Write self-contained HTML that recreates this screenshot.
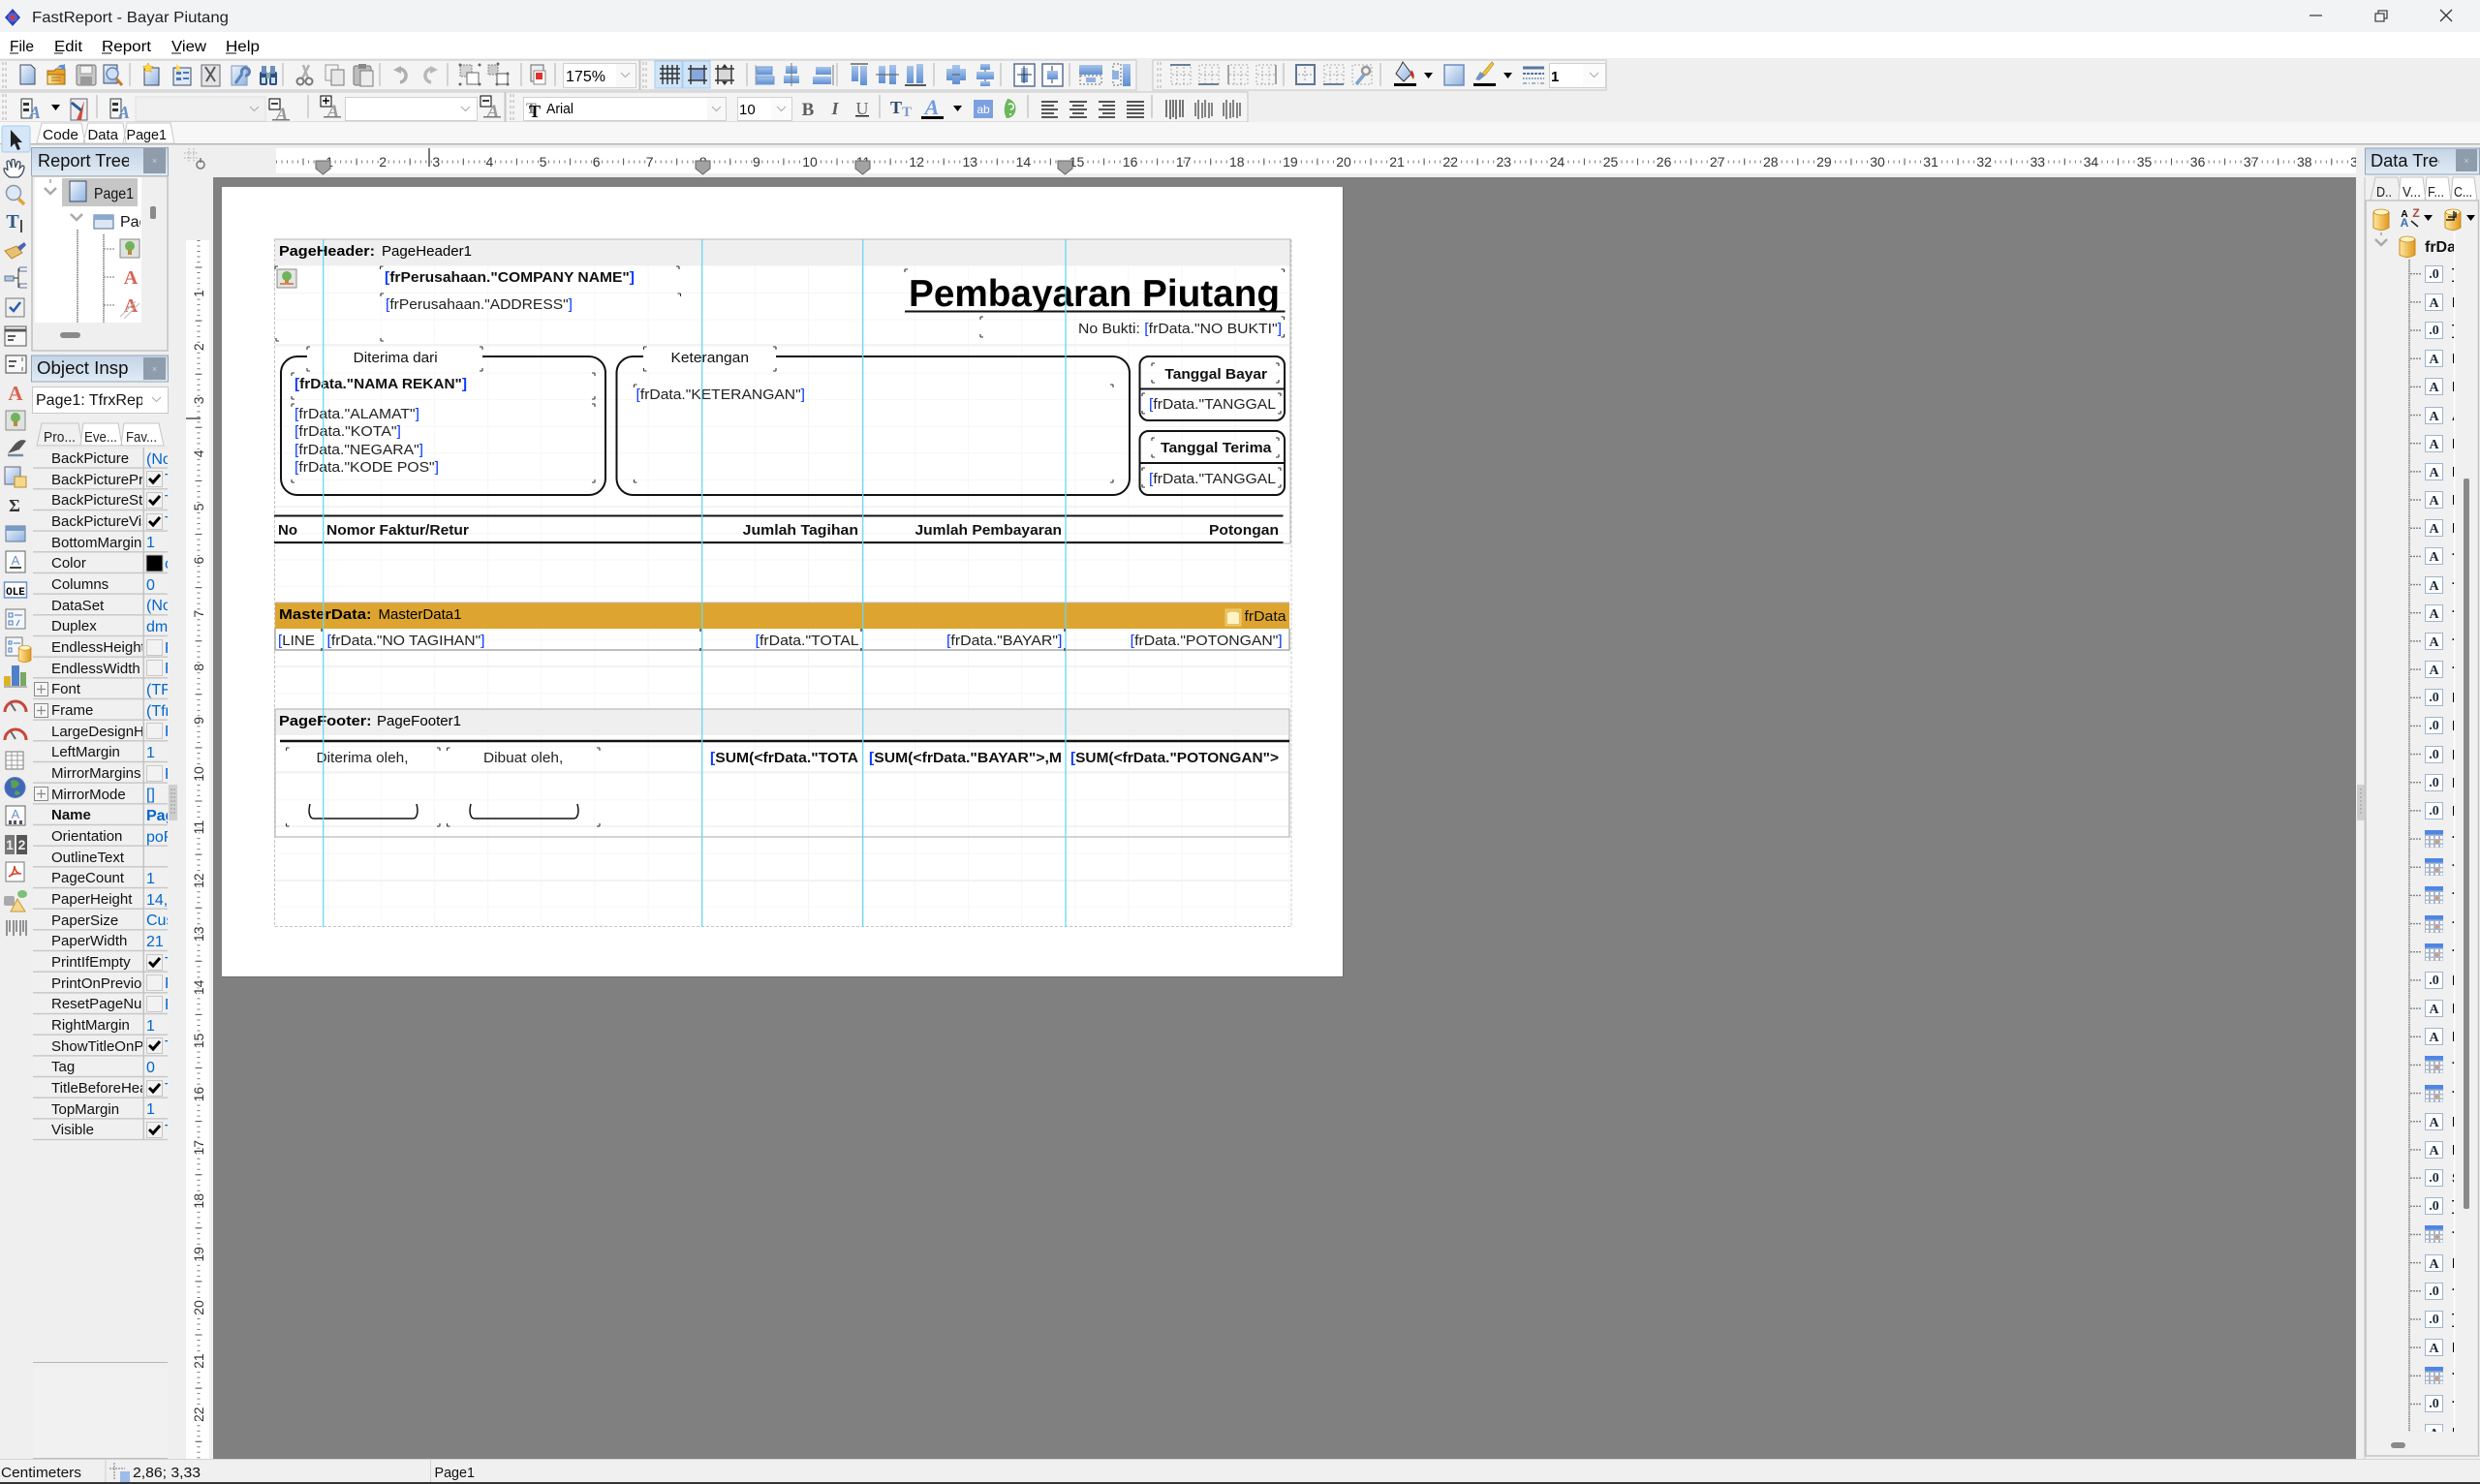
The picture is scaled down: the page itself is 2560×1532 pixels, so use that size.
<!DOCTYPE html>
<html lang="en"><head><meta charset="utf-8"><title>FastReport - Bayar Piutang</title>
<style>
html,body{margin:0;padding:0;background:#efefef;width:2560px;height:1532px;overflow:hidden}
svg{display:block}
text{font-family:"Liberation Sans",Arial,sans-serif;font-size:15px;fill:#000;white-space:pre}
.b{font-weight:700}
.u{fill:#0a3cff}
.r{font-size:14px;fill:#333;text-anchor:middle;paint-order:stroke;stroke:#fff;stroke-width:3px}
.p{font-size:15px;fill:#111}
.v{font-size:16px;fill:#0066cc}
.m{font-size:16px;fill:#111}
.c{text-anchor:middle}
.e{text-anchor:end}
</style></head><body>
<svg width="2560" height="1532" viewBox="0 0 2560 1532" xmlns="http://www.w3.org/2000/svg">
<defs>
<linearGradient id="gB" x1="0" y1="0" x2="1" y2="1"><stop offset="0" stop-color="#f2f6fc"/><stop offset="1" stop-color="#8fb2e0"/></linearGradient>
<linearGradient id="gBB" x1="0" y1="0" x2="0" y2="1"><stop offset="0" stop-color="#a9c6ec"/><stop offset="1" stop-color="#5f8fd2"/></linearGradient>
<linearGradient id="gG" x1="0" y1="0" x2="1" y2="0"><stop offset="0" stop-color="#ffe9a0"/><stop offset="1" stop-color="#e0981e"/></linearGradient>
<linearGradient id="gS" x1="0" y1="0" x2="1" y2="1"><stop offset="0" stop-color="#fff"/><stop offset="1" stop-color="#b4b4b4"/></linearGradient>
<linearGradient id="gT" x1="0" y1="0" x2="0" y2="1"><stop offset="0" stop-color="#c3d4e6"/><stop offset="1" stop-color="#e0ebf5"/></linearGradient>
<pattern id="grid" x="283" y="247" width="55.1" height="27.55" patternUnits="userSpaceOnUse"><path d="M0 0V27.55M0 0H55.1" stroke="#f3f3f3" stroke-width="1.4" fill="none"/></pattern>
<pattern id="rows" x="34" y="462.2" width="139" height="21.67" patternUnits="userSpaceOnUse"><rect width="139" height="21.67" fill="#f0f0f0"/><rect y="20.2" width="139" height="1.4" fill="#c6c6c6"/></pattern>
<pattern id="brn" x="2487" y="268.1" width="16" height="29.17" patternUnits="userSpaceOnUse"><path d="M1 14.6H12" stroke="#777" stroke-width="1.2" stroke-dasharray="2 1"/></pattern>
<clipPath id="cName"><rect x="34" y="462" width="113" height="716"/></clipPath>
<clipPath id="cVal"><rect x="149" y="462" width="24" height="716"/></clipPath>
<clipPath id="cRT"><rect x="36" y="150" width="97" height="31"/></clipPath>
<clipPath id="cOI"><rect x="36" y="365" width="97" height="29"/></clipPath>
<clipPath id="cDT"><rect x="2445" y="150" width="73" height="30"/></clipPath>
<clipPath id="cCombo"><rect x="33" y="399" width="114" height="27"/></clipPath>
<clipPath id="cPag"><rect x="120" y="214" width="25" height="26"/></clipPath>
<clipPath id="cTree"><rect x="2443" y="268" width="90" height="1210"/></clipPath>
<clipPath id="cFr"><rect x="2500" y="240" width="33" height="26"/></clipPath>
<clipPath id="cTitle"><rect x="930" y="280" width="400" height="40.5"/></clipPath>
<clipPath id="cRul"><rect x="285" y="153" width="2147" height="26"/></clipPath>

<g id="page"><path d="M5 2h11l4 4v16H5z" fill="url(#gB)" stroke="#3d4c60"/></g>
<g id="open"><path d="M3 8h7l2-2h9v16H3z" fill="#e9a22a" stroke="#a06a10"/><path d="M3 12h18v10H3z" fill="url(#gG)" stroke="#a06a10"/><path d="M7 15h10M7 18h10" stroke="#a9701c"/><path d="M13 5q3-4 6-3l2-1v6h-5l2-2q-2-1-5 0z" fill="#5c8fd0"/></g>
<g id="save"><rect x="3" y="2" width="20" height="21" rx="2" fill="#c9c9c9" stroke="#777"/><rect x="7" y="3" width="12" height="8" fill="#f4f4f4" stroke="#999"/><rect x="7" y="14" width="12" height="9" fill="#9a9a9a"/></g>
<g id="prev"><path d="M3 2h14v19H3z" fill="url(#gB)" stroke="#3d4c60"/><circle cx="12" cy="11" r="6" fill="#cfe0f5" stroke="#6388b8" stroke-width="1.5"/><path d="M16 16l6 7" stroke="#c97c28" stroke-width="3"/></g>
<g id="newp"><path d="M5 5h15v18H5z" fill="url(#gB)" stroke="#3d4c60"/><path d="M9 0l1.5 3 3.5.5-2.500 2.500.8 3.500L9 8l-3.800 1.500L6 6 3.500 3.500 7 3z" fill="#ffd84a" stroke="#e0a820" stroke-width=".6"/></g>
<g id="newd"><rect x="4" y="5" width="18" height="18" fill="#dfe8f4" stroke="#3d4c60"/><rect x="7" y="9" width="5" height="3" fill="#4a78b8"/><rect x="7" y="15" width="5" height="3" fill="#4a78b8"/><path d="M14 10h6M14 16h6" stroke="#4a78b8" stroke-width="2"/><path d="M7 0l1.500 3 3.500.5-2.500 2.500.8 3.500L7 8z" fill="#ffd84a"/></g>
<g id="delp"><rect x="3" y="2" width="19" height="22" fill="#e4e4e4" stroke="#667"/><path d="M7 4l10 15M17 4L8 19" stroke="#555" stroke-width="2"/></g>
<g id="sett"><rect x="4" y="3" width="16" height="20" fill="url(#gB)" stroke="#7d97bb"/><path d="M8 21L15 11M15 11a4 4 0 1 1 3 2" stroke="#5c82b8" stroke-width="3" fill="none"/></g>
<g id="find"><rect x="3" y="9" width="8" height="14" rx="2" fill="#2e5082"/><rect x="13" y="9" width="8" height="14" rx="2" fill="#2e5082"/><rect x="5" y="3" width="5" height="8" fill="#6e8fbc"/><rect x="14" y="3" width="5" height="8" fill="#6e8fbc"/><rect x="10" y="10" width="4" height="6" fill="#8aa"/><rect x="5" y="15" width="4" height="6" fill="#cfe0f5"/><rect x="15" y="15" width="4" height="6" fill="#cfe0f5"/></g>
<g id="cut"><path d="M9 16L16 2M15 16L10 2" stroke="#b0b0b0" stroke-width="2.500"/><circle cx="7" cy="19" r="3.500" fill="none" stroke="#777" stroke-width="2"/><circle cx="16" cy="19" r="3.500" fill="none" stroke="#777" stroke-width="2"/></g>
<g id="copy"><rect x="3" y="2" width="13" height="16" fill="#f4f4f4" stroke="#999"/><rect x="9" y="7" width="13" height="16" fill="#e8e8e8" stroke="#777"/></g>
<g id="past"><rect x="3" y="3" width="18" height="20" rx="2" fill="#bcbcbc" stroke="#777"/><rect x="8" y="1" width="8" height="5" fill="#888"/><rect x="10" y="8" width="13" height="16" fill="#ececec" stroke="#777"/></g>
<g id="undo"><path d="M9 6a7 7 0 1 1 2 14" fill="none" stroke="#aeaeae" stroke-width="3.500"/><path d="M4 7l8-4v8z" fill="#aeaeae"/></g>
<g id="redo"><path d="M15 6a7 7 0 1 0-2 14" fill="none" stroke="#b8b8b8" stroke-width="3.500"/><path d="M20 7l-8-4v8z" fill="#b8b8b8"/></g>
<g id="grp"><rect x="2" y="2" width="12" height="12" fill="#d4d4d4" stroke="#888" stroke-dasharray="2 1"/><rect x="9" y="10" width="12" height="12" fill="#fff" stroke="#666"/><circle cx="2" cy="2" r="1.500" fill="#666"/><circle cx="22" cy="2" r="1.500" fill="#666"/><circle cx="2" cy="22" r="1.500" fill="#666"/><circle cx="22" cy="22" r="1.500" fill="#666"/></g>
<g id="ugrp"><rect x="2" y="2" width="10" height="10" fill="#ccc" stroke="#888" stroke-dasharray="2 1"/><rect x="11" y="11" width="11" height="11" fill="#fff" stroke="#555"/><circle cx="12" cy="1" r="1.500" fill="#666"/><circle cx="22" cy="11" r="1.500" fill="#666"/><circle cx="11" cy="22" r="1.500" fill="#666"/><circle cx="22" cy="22" r="1.500" fill="#666"/></g>
<g id="fron"><rect x="4" y="2" width="13" height="17" fill="#eee" stroke="#666"/><rect x="7" y="8" width="12" height="14" fill="#fff" stroke="#888"/><rect x="9" y="10" width="7" height="7" fill="#e0322c"/></g>
<g id="g1"><path d="M5 2v20M10 2v20M15 2v20M20 2v20M2 6h21M2 11h21M2 16h21" stroke="#333" stroke-width="1.500"/></g>
<g id="g2"><rect x="6" y="6" width="12" height="12" fill="#86a8dc"/><path d="M5 2v20M19 2v20M2 6h20M2 18h20" stroke="#333" stroke-width="1.500"/></g>
<g id="g3"><rect x="6" y="6" width="12" height="12" fill="#d8d8d8"/><path d="M5 2v20M19 2v20M2 6h20M2 18h20" stroke="#333" stroke-width="1.500"/><path d="M12 1l-3 4h6zM12 23l-3-4h6z" fill="#333"/></g>
<g id="a1"><rect x="3" y="4" width="16" height="8" fill="url(#gBB)" stroke="#6d97d3"/><rect x="3" y="14" width="18" height="8" fill="url(#gBB)" stroke="#6d97d3"/><path d="M2 2v21" stroke="#aaa"/></g>
<g id="a2"><rect x="6" y="3" width="12" height="8" fill="url(#gBB)"/><rect x="4" y="13" width="16" height="8" fill="url(#gBB)"/><path d="M12 0v24" stroke="#777"/></g>
<g id="a3"><rect x="5" y="4" width="16" height="8" fill="url(#gBB)"/><rect x="2" y="14" width="19" height="8" fill="url(#gBB)"/><path d="M23 2v21" stroke="#777"/></g>
<g id="a4"><path d="M3 1h18" stroke="#888" stroke-width="2"/><rect x="4" y="3" width="7" height="16" fill="url(#gBB)"/><rect x="13" y="3" width="7" height="20" fill="url(#gBB)"/></g>
<g id="a5"><rect x="3" y="3" width="7" height="18" fill="url(#gBB)"/><rect x="14" y="2" width="7" height="20" fill="url(#gBB)"/><path d="M0 12h24" stroke="#555"/></g>
<g id="a6"><rect x="3" y="3" width="7" height="18" fill="url(#gBB)"/><rect x="13" y="1" width="7" height="20" fill="url(#gBB)"/><path d="M1 23h22" stroke="#555" stroke-width="2"/></g>
<g id="d1"><rect x="8" y="2" width="8" height="20" fill="url(#gBB)"/><rect x="2" y="6" width="6" height="12" fill="url(#gBB)"/><rect x="16" y="6" width="6" height="12" fill="url(#gBB)"/><path d="M8 12h8" stroke="#555"/></g>
<g id="d2"><rect x="7" y="1" width="10" height="6" fill="url(#gBB)"/><rect x="3" y="9" width="18" height="8" fill="url(#gBB)"/><rect x="7" y="19" width="10" height="5" fill="url(#gBB)"/><path d="M12 7v2M12 17v2" stroke="#555"/></g>
<g id="c1"><rect x="2" y="1" width="21" height="23" fill="#fff" stroke="#5a7090" stroke-width="1.500"/><rect x="9" y="5" width="7" height="15" fill="url(#gBB)"/><path d="M5 12h15M12 3v18" stroke="#333"/></g>
<g id="c2"><rect x="2" y="1" width="21" height="23" fill="#fff" stroke="#5a7090" stroke-width="1.500"/><rect x="7" y="8" width="11" height="9" fill="url(#gBB)"/><path d="M12 3v5M12 17v4" stroke="#333"/></g>
<g id="s1"><rect x="0" y="2" width="24" height="10" fill="url(#gBB)"/><path d="M1 13h22v9H1z" fill="none" stroke="#666" stroke-dasharray="2 2"/><rect x="7" y="15" width="10" height="5" fill="#8fb2e0"/></g>
<g id="s2"><rect x="15" y="1" width="8" height="23" fill="url(#gBB)"/><path d="M5 1h8v22H5z" fill="none" stroke="#666" stroke-dasharray="2 2"/><rect x="4" y="8" width="7" height="9" fill="#8fb2e0"/></g>
<g id="f1"><path d="M2 2v20h20V2z" fill="none" stroke="#aaa" stroke-dasharray="2 2"/><path d="M1 2h21M8 4v18M15 4v18M3 12h18" stroke="#aaa" stroke-dasharray="2 2"/><path d="M1 2h21" stroke="#6a7f98" stroke-width="2"/></g>
<g id="f2"><path d="M2 2v20h20V2z" fill="none" stroke="#aaa" stroke-dasharray="2 2"/><path d="M8 4v18M15 4v18M3 12h18" stroke="#aaa" stroke-dasharray="2 2"/><path d="M1 22h21" stroke="#6a7f98" stroke-width="2"/></g>
<g id="f3"><path d="M2 2v20h20V2z" fill="none" stroke="#aaa" stroke-dasharray="2 2"/><path d="M8 4v18M15 4v18M3 12h18" stroke="#aaa" stroke-dasharray="2 2"/><path d="M2 2v20" stroke="#888" stroke-width="1.500"/></g>
<g id="f4"><path d="M2 2v20h20V2z" fill="none" stroke="#aaa" stroke-dasharray="2 2"/><path d="M8 4v18M15 4v18M3 12h18" stroke="#aaa" stroke-dasharray="2 2"/><path d="M22 2v20" stroke="#888" stroke-width="1.500"/></g>
<g id="f5"><rect x="2" y="2" width="19" height="20" fill="none" stroke="#5f7694" stroke-width="2"/><path d="M11 4v16M4 12h15" stroke="#999" stroke-dasharray="2 2"/></g>
<g id="f7"><path d="M2 2v20h20V2z" fill="none" stroke="#aaa" stroke-dasharray="2 2"/><path d="M6 22L15 11" stroke="#7ea2d4" stroke-width="3.500"/><circle cx="16" cy="8" r="4" fill="none" stroke="#999" stroke-width="2.500"/></g>
<g id="fill"><path d="M10 1l9 12-8 8-8-8 5-8z" fill="url(#gB)" stroke="#333"/><path d="M19 9q4 5 2 10l-3-5z" fill="#c9281e"/><rect x="1" y="23" width="23" height="3" fill="#000"/></g>
<g id="fram"><rect x="2" y="2" width="20" height="21" fill="url(#gB)" stroke="#6a8dbe" stroke-width="1.500"/></g>
<g id="pen"><path d="M3 19l5-8 5 4-6 5z" fill="#6f93c6"/><path d="M10 13L20 1l2 2-9 12z" fill="#f0c33e" stroke="#b08418" stroke-width=".6"/><rect x="1" y="23" width="23" height="3" fill="#000"/></g>
<g id="lines"><path d="M1 4h22" stroke="#55779f" stroke-width="3"/><path d="M1 10h22" stroke="#55779f" stroke-width="2" stroke-dasharray="3 1"/><path d="M1 15h22" stroke="#55779f" stroke-width="1.500" stroke-dasharray="1.500 1.500"/><path d="M1 20h22" stroke="#55779f" stroke-dasharray="4 2 1 2"/></g>
<g id="arr"><path d="M0 0h9l-4.500 6z" fill="#000"/></g>
<g id="chev"><path d="M0 0l4.500 4.500L9 0" fill="none" stroke="#aaa" stroke-width="1"/></g>
<g id="t1"><rect x="3" y="2" width="11" height="20" fill="#f6f6f6" stroke="#344"/><rect x="5" y="6" width="6" height="3" fill="#333"/><rect x="5" y="12" width="6" height="3" fill="#333"/><text x="17" y="22" class="c b" style="font-family:'Liberation Serif',serif;font-size:18px;font-style:italic;fill:#6a8fc8">A</text></g>
<g id="t2"><rect x="3" y="2" width="17" height="22" fill="#eee" stroke="#667"/><path d="M9 24L17 4l-3 20" fill="#d04c3e"/><path d="M4 6l10 8" stroke="#2b5a94" stroke-width="3"/></g>
<g id="t3"><rect x="2" y="2" width="11" height="11" fill="#fff" stroke="#000"/><path d="M4 7h7M7.500 3.500v7" stroke="#000" stroke-width="1.500"/><text x="15" y="24" class="c b" style="font-family:'Liberation Serif',serif;font-size:19px;font-style:italic;fill:#999">A</text><rect x="5" y="23" width="18" height="1.500" fill="#777"/></g>
<g id="t4"><rect x="2" y="2" width="11" height="11" fill="#fff" stroke="#000"/><path d="M4 7h7" stroke="#000" stroke-width="1.500"/><text x="15" y="24" class="c b" style="font-family:'Liberation Serif',serif;font-size:19px;font-style:italic;fill:#999">A</text><rect x="5" y="23" width="18" height="1.500" fill="#777"/></g>
<g id="al1"><path d="M2 5h17M2 9h13M2 13h17M2 17h13M2 21h17" stroke="#555" stroke-width="2"/></g>
<g id="al2"><path d="M2 5h18M5 9h12M2 13h18M5 17h12M2 21h18" stroke="#555" stroke-width="2"/></g>
<g id="al3"><path d="M3 5h17M7 9h13M3 13h17M7 17h13M3 21h17" stroke="#555" stroke-width="2"/></g>
<g id="al4"><path d="M2 5h18M2 9h18M2 13h18M2 17h18M2 21h18" stroke="#555" stroke-width="2"/></g>
<g id="bc"><path d="M3 3v18M7 3v20M10 3v18M13 3v20M17 3v18M20 3v18" stroke="#555" stroke-width="1.600"/></g>
<g id="bc2"><path d="M4 6v14M7 3v20M11 6v16M14 3v18M18 6v16M21 6v14" stroke="#555" stroke-width="1.400"/></g>
<g id="db"><path d="M2 5q8-5 16 0v16q-8 5-16 0z" fill="url(#gG)" stroke="#c98a1a"/><ellipse cx="10" cy="5" rx="7.500" ry="3" fill="#fff4c2" stroke="#c98a1a" stroke-width=".8"/></g>
<g id="nA"><rect x=".5" y=".5" width="18" height="17" fill="#fff" stroke="#9db5d2"/><text x="9.500" y="14" class="c b" style="font-family:'Liberation Serif',serif;font-size:14px;fill:#1d2a3c">A</text></g>
<g id="n0"><rect x=".5" y=".5" width="18" height="17" fill="#fff" stroke="#9db5d2"/><text x="9.500" y="13" class="c b" style="font-family:'Liberation Serif',serif;font-size:14px;fill:#1d2a3c">.0</text></g>
<g id="cal"><rect x="0" y="0" width="19" height="18" fill="#a9b7cb"/><rect x="0" y="0" width="19" height="4.500" fill="#4f86e6"/><path d="M1 6h3v3H1zM6 6h3v3H6zM11 6h3v3h-3zM16 6h2.500v3H16zM1 10.500h3v3H1zM6 10.500h3v3H6zM16 10.500h2.500v3H16zM1 15h3v2.500H1zM6 15h3v2.500H6zM11 15h3v2.500h-3zM16 15h2.500v2.500H16z" fill="#fff"/><rect x="11" y="10.500" width="3" height="3" fill="#ec9050"/></g>
<g id="ck"><rect x=".5" y=".5" width="16" height="16" fill="#f2f2f2" stroke="#c4c4c4"/><path d="M3 8l4 4 7-8" fill="none" stroke="#000" stroke-width="3"/></g>
<g id="uk"><rect x=".5" y=".5" width="16" height="16" fill="#f2f2f2" stroke="#c8c8c8"/></g>
<g id="pl"><rect x=".5" y=".5" width="14" height="14" fill="#f6f6f6" stroke="#888"/><path d="M3 7.500h9M7.500 3v9" stroke="#888" stroke-width="1.200"/></g>
<g id="gr"><path d="M0 0v3M3 0v3M0 6v3M3 6v3M0 12v3M3 12v3M0 18v3M3 18v3M0 24v3M3 24v3" stroke="#bbb" stroke-width="1.200"/></g>
<g id="gauge"><path d="M2 19a11 11 0 0 1 22 0z" fill="#eee"/><path d="M2 19a11 11 0 0 1 22 0" fill="none" stroke="#c9453a" stroke-width="3"/><path d="M13 18L8 10" stroke="#666" stroke-width="2"/></g>
</defs>

<rect width="2560" height="1532" fill="#efefef"/>
<!-- title -->
<rect width="2560" height="33" fill="#f2f3f5"/>
<rect y="33" width="2560" height="27" fill="#fff"/>
<path d="M13 5v4l8 9-8 9-8-9 8-9z" fill="#2f3fb2"/><circle cx="13" cy="18" r="5" fill="#4a63d8"/><circle cx="13" cy="18" r="2.500" fill="#d93a3a"/>
<text x="33" y="23" textLength="203" lengthAdjust="spacingAndGlyphs" style="font-size:16px;fill:#222">FastReport - Bayar Piutang</text>
<path d="M2384 16h13" stroke="#444" stroke-width="1.300"/>
<path d="M2452 14h9v8h-9zM2455 14v-3h9v8h-3" fill="none" stroke="#444" stroke-width="1.300"/>
<path d="M2519 10l12 12M2531 10l-12 12" stroke="#333" stroke-width="1.300"/>
<!-- menu -->
<g style="fill:#111"><text x="10" y="53" textLength="25" lengthAdjust="spacingAndGlyphs" style="font-size:16px">File</text><text x="56" y="53" textLength="29" lengthAdjust="spacingAndGlyphs" style="font-size:16px">Edit</text><text x="105" y="53" textLength="51" lengthAdjust="spacingAndGlyphs" style="font-size:16px">Report</text><text x="177" y="53" textLength="36" lengthAdjust="spacingAndGlyphs" style="font-size:16px">View</text><text x="233" y="53" textLength="35" lengthAdjust="spacingAndGlyphs" style="font-size:16px">Help</text></g>
<path d="M10 55h9M56 55h9M105 55h10M177 55h10M233 55h11" stroke="#111"/>

<!-- toolbars -->
<g fill="#f4f4f4" stroke="#c6c6c6"><rect x="-1" y="62" width="661" height="31"/><rect x="661" y="62" width="512" height="31"/><rect x="1190" y="62" width="468" height="31"/><rect x="-1" y="95" width="522" height="31"/><rect x="522" y="95" width="766" height="31"/></g>
<use href="#gr" x="3" y="64"/><use href="#gr" x="664" y="64"/><use href="#gr" x="1195" y="64"/><use href="#gr" x="3" y="97"/><use href="#gr" x="527" y="97"/>
<path d="M134 65v24M292 65v24M392 65v24M462 65v24M538 65v24M573 65v24M771 65v24M864 65v24M964 65v24M1033 65v24M1104 65v24M1325 65v24M1425 65v24M100 98v24M318 98v24M908 98v24M1061 98v24M1189 98v24" stroke="#c8c8c8" stroke-width="1.500"/>
<!-- row1 -->
<use href="#page" x="16" y="65"/><use href="#open" x="46" y="65"/><use href="#save" x="76" y="65"/><use href="#prev" x="104" y="65"/><use href="#newp" x="144" y="65"/><use href="#newd" x="175" y="65"/><use href="#delp" x="205" y="65"/><use href="#sett" x="235" y="65"/><use href="#find" x="265" y="65"/><use href="#cut" x="303" y="65"/><use href="#copy" x="333" y="65"/><use href="#past" x="362" y="65"/><use href="#undo" x="402" y="65"/><use href="#redo" x="432" y="65"/><use href="#grp" x="473" y="65"/><use href="#ugrp" x="502" y="65"/><use href="#fron" x="544" y="65"/>
<rect x="581.500" y="65.500" width="75" height="25" fill="#fff" stroke="#d0d0d0"/><rect x="636" y="66" width="20" height="24" fill="#f8f8f8"/>
<text x="584" y="84" textLength="41" lengthAdjust="spacingAndGlyphs" style="font-size:16px">175%</text><use href="#chev" x="641" y="75"/>
<rect x="676" y="63" width="28" height="28" fill="#cfe4f7" stroke="#a5cdf0"/><rect x="705" y="63" width="28" height="28" fill="#cfe4f7" stroke="#a5cdf0"/>
<use href="#g1" x="679" y="65"/><use href="#g2" x="708" y="65"/><use href="#g3" x="736" y="65"/>
<use href="#a1" x="778" y="65"/><use href="#a2" x="805" y="65"/><use href="#a3" x="837" y="65"/><use href="#a4" x="875" y="65"/><use href="#a5" x="904" y="65"/><use href="#a6" x="933" y="65"/><use href="#d1" x="975" y="65"/><use href="#d2" x="1005" y="65"/><use href="#c1" x="1045" y="65"/><use href="#c2" x="1074" y="65"/><use href="#s1" x="1114" y="65"/><use href="#s2" x="1144" y="65"/>
<use href="#f1" x="1207" y="65"/><use href="#f2" x="1236" y="65"/><use href="#f3" x="1266" y="65"/><use href="#f4" x="1295" y="65"/><use href="#f5" x="1336" y="65"/><use href="#f2" x="1365" y="65"/><use href="#f7" x="1394" y="65"/>
<use href="#fill" x="1438" y="63"/><use href="#arr" x="1470" y="75"/><use href="#fram" x="1489" y="65"/><use href="#pen" x="1520" y="63"/><use href="#arr" x="1552" y="75"/><use href="#lines" x="1571" y="66"/>
<rect x="1599.500" y="65.500" width="58" height="25" fill="#fbfbfb" stroke="#d0d0d0"/><rect x="1600" y="66" width="34" height="24" fill="#fff"/><text x="1601" y="84" class="b" style="font-size:15px">1</text><use href="#chev" x="1641" y="75"/>
<!-- row2 -->
<use href="#t1" x="19" y="100"/><use href="#arr" x="53" y="108"/><use href="#t2" x="70" y="100"/><use href="#t1" x="111" y="100"/>
<rect x="140" y="100" width="134" height="25" fill="#f0f0f0" stroke="#e0e0e0"/><use href="#chev" x="258" y="110"/><use href="#t4" x="276" y="100"/>
<use href="#t3" x="329" y="97"/><rect x="356.500" y="100.500" width="136" height="24" fill="#fff" stroke="#d0d0d0"/><use href="#chev" x="476" y="110"/><use href="#t4" x="494" y="97"/>
<rect x="540.500" y="100.500" width="209" height="24" fill="#fff" stroke="#d0d0d0"/><rect x="730" y="101" width="19" height="23" fill="#f8f8f8"/><use href="#chev" x="735" y="110"/>
<text x="543" y="117" class="b" style="font-family:'Liberation Serif',serif;font-size:16px;fill:#888">T</text><text x="546" y="121" class="b" style="font-family:'Liberation Serif',serif;font-size:18px">T</text><text x="564" y="117" textLength="28" lengthAdjust="spacingAndGlyphs" style="font-size:15px">Arial</text>
<rect x="761.500" y="100.500" width="56" height="24" fill="#fbfbfb" stroke="#d0d0d0"/><rect x="762" y="101" width="34" height="23" fill="#fff"/><text x="763" y="118" style="font-size:15px">10</text><use href="#chev" x="802" y="110"/>
<text x="834" y="119" class="b c" style="font-family:'Liberation Serif',serif;font-size:19px;fill:#5c5c5c">B</text>
<text x="862" y="118" class="b c" style="font-family:'Liberation Serif',serif;font-size:18px;font-style:italic;fill:#5c5c5c">I</text>
<text x="890" y="118" class="c" style="font-family:'Liberation Serif',serif;font-size:18px;fill:#666">U</text><rect x="883" y="119" width="14" height="1.500" fill="#222"/>
<text x="925" y="117" class="b c" style="font-family:'Liberation Serif',serif;font-size:18px;fill:#2e4a66">T</text><text x="936" y="120" class="b c" style="font-family:'Liberation Serif',serif;font-size:15px;fill:#7d9dc4">T</text>
<text x="962" y="118" class="b c" style="font-family:'Liberation Serif',serif;font-size:22px;font-style:italic;fill:#6f9ae0">A</text><rect x="951" y="120" width="23" height="3" fill="#000"/><use href="#arr" x="984" y="109"/>
<rect x="1005" y="103" width="20" height="19" fill="#7da1e0"/><text x="1015" y="117" class="c" style="font-size:12px;fill:#fff">ab</text>
<path d="M1040 102a9 10 0 1 1-1 20q-5-9 1-20z" fill="#6cb75c"/><path d="M1041 108a3 3 0 1 1 2 5M1043 117v2" stroke="#fff" stroke-width="1.500" fill="none"/>
<use href="#al1" x="1073" y="100"/><use href="#al2" x="1102" y="100"/><use href="#al3" x="1131" y="100"/><use href="#al4" x="1161" y="100"/>
<use href="#bc" x="1201" y="100"/><use href="#bc2" x="1230" y="100"/><use href="#bc2" x="1259" y="100"/>

<!-- tabs -->
<rect y="126" width="2560" height="22" fill="#f7f7f7"/><rect y="148" width="2560" height="1.500" fill="#b4b4b4"/>
<path d="M38 148l5-21h41l4 21zM86 148l5-21h36l3 21zM127 148l4-21h45l4 21z" fill="#fff" stroke="#c8c8c8"/>
<text x="44" y="144" textLength="37" lengthAdjust="spacingAndGlyphs" style="font-size:15px;fill:#111">Code</text><text x="90.500" y="144" textLength="31.500" lengthAdjust="spacingAndGlyphs" style="font-size:15px;fill:#111">Data</text><text x="130.500" y="144" textLength="41.500" lengthAdjust="spacingAndGlyphs" style="font-size:15px;fill:#111">Page1</text>

<!-- top ruler -->
<rect x="285" y="153" width="2147" height="26" fill="#fff"/>
<path d="M285 167H2432" stroke="#777" stroke-width="3" stroke-dasharray="1 4.510"/>
<path d="M312.500 167H2432" stroke="#555" stroke-width="7" stroke-dasharray="1 54.100"/>
<g clip-path="url(#cRul)">
<text class="r" x="340.100" y="172">1</text><text class="r" x="395.200" y="172">2</text><text class="r" x="450.300" y="172">3</text><text class="r" x="505.400" y="172">4</text><text class="r" x="560.500" y="172">5</text><text class="r" x="615.600" y="172">6</text><text class="r" x="670.700" y="172">7</text><text class="r" x="725.800" y="172">8</text><text class="r" x="780.900" y="172">9</text><text class="r" x="836" y="172">10</text><text class="r" x="891.100" y="172">11</text><text class="r" x="946.200" y="172">12</text><text class="r" x="1001.300" y="172">13</text><text class="r" x="1056.400" y="172">14</text><text class="r" x="1111.500" y="172">15</text><text class="r" x="1166.600" y="172">16</text><text class="r" x="1221.700" y="172">17</text><text class="r" x="1276.800" y="172">18</text><text class="r" x="1331.900" y="172">19</text><text class="r" x="1387" y="172">20</text><text class="r" x="1442.100" y="172">21</text><text class="r" x="1497.200" y="172">22</text><text class="r" x="1552.300" y="172">23</text><text class="r" x="1607.400" y="172">24</text><text class="r" x="1662.500" y="172">25</text><text class="r" x="1717.600" y="172">26</text><text class="r" x="1772.700" y="172">27</text><text class="r" x="1827.800" y="172">28</text><text class="r" x="1882.900" y="172">29</text><text class="r" x="1938" y="172">30</text><text class="r" x="1993.100" y="172">31</text><text class="r" x="2048.200" y="172">32</text><text class="r" x="2103.300" y="172">33</text><text class="r" x="2158.400" y="172">34</text><text class="r" x="2213.500" y="172">35</text><text class="r" x="2268.600" y="172">36</text><text class="r" x="2323.700" y="172">37</text><text class="r" x="2378.800" y="172">38</text><text class="r" x="2433.900" y="172">39</text>
</g>
<path d="M443 153v19" stroke="#333" stroke-width="1.300"/>
<g fill="#a2a2a2" stroke="#666"><path d="M326 166h15v8l-7.500 6-7.500-6z"/><path d="M718 166h15v8l-7.500 6-7.500-6z"/><path d="M883 166h15v8l-7.500 6-7.500-6z"/><path d="M1092 166h15v8l-7.500 6-7.500-6z"/></g>
<!-- corner icon -->
<path d="M190 158h14M190 163h14M195 153v14M200 153v14" stroke="#aaa" stroke-dasharray="1.500 1.500"/><circle cx="207" cy="170" r="4" fill="none" stroke="#777" stroke-width="1.500"/><path d="M207 163v5" stroke="#777" stroke-width="1.500"/>

<!-- workspace -->
<rect x="220" y="183" width="2212" height="1323" fill="#808080"/>
<rect x="229" y="193" width="1157" height="815" fill="#fff"/>
<path d="M1386.500 193V1008.500H229" fill="none" stroke="#6e6e6e"/>
<rect x="283" y="247" width="1050" height="710" fill="url(#grid)"/>
<rect x="283.500" y="247" width="1049.500" height="709.500" fill="none" stroke="#c4c4c4" stroke-dasharray="3 2"/>
<path d="M284 688h1047M284 797h1047M284 853h1047M284 909h1047M284 356h1047M284 523h1047" stroke="#f3f3f3" stroke-width="2"/>

<!-- page header -->
<rect x="284" y="247" width="1048" height="27" fill="#efefef"/>
<path d="M284 247H1332V561H284" fill="none" stroke="#b4b4b4"/>
<text x="288" y="264" class="b" textLength="99" lengthAdjust="spacingAndGlyphs">PageHeader:</text><text x="394" y="264" textLength="93" lengthAdjust="spacingAndGlyphs">PageHeader1</text>
<rect x="286" y="278" width="20" height="19" fill="#e2e6e2" stroke="#8a8a8a"/><circle cx="296" cy="285" r="5" fill="#6fb45a"/><rect x="294" y="289" width="4" height="5" fill="#c08a3a"/><rect x="289" y="292" width="14" height="2" fill="#e08060"/>
<text x="397" y="291" textLength="258" lengthAdjust="spacingAndGlyphs" class="b" style="fill:#111"><tspan class="u">[</tspan>frPerusahaan."COMPANY NAME"<tspan class="u">]</tspan></text>
<text x="398" y="319" textLength="193" lengthAdjust="spacingAndGlyphs" style="fill:#222"><tspan class="u">[</tspan>frPerusahaan."ADDRESS"<tspan class="u">]</tspan></text>
<g clip-path="url(#cTitle)"><text x="938" y="316" class="b" textLength="383" lengthAdjust="spacingAndGlyphs" style="font-size:38.600px">Pembayaran Piutang</text></g>
<path d="M934 321.500H1326.500" stroke="#111" stroke-width="2"/>
<text x="1113" y="344" textLength="210" lengthAdjust="spacingAndGlyphs" style="fill:#222">No Bukti: <tspan class="u">[</tspan>frData."NO BUKTI"<tspan class="u">]</tspan></text>

<g fill="none" stroke="#111" stroke-width="2">
<rect x="290" y="368" width="335" height="143" rx="17"/>
<rect x="636.500" y="368" width="529.500" height="143" rx="17"/>
<rect x="1176.500" y="368" width="149.500" height="66" rx="9"/><path d="M1176.500 401.500H1326"/>
<rect x="1176.500" y="445" width="149.500" height="66" rx="9"/><path d="M1176.500 478H1326"/>
</g>
<rect x="317" y="358" width="181" height="25" fill="#fff"/><rect x="664" y="358" width="137" height="25" fill="#fff"/>
<text x="364.700" y="374" textLength="87" lengthAdjust="spacingAndGlyphs" style="fill:#111">Diterima dari</text>
<text x="692.500" y="374" textLength="80.500" lengthAdjust="spacingAndGlyphs" style="fill:#111">Keterangan</text>
<text x="304" y="401" textLength="178" lengthAdjust="spacingAndGlyphs" class="b" style="fill:#111"><tspan class="u">[</tspan>frData."NAMA REKAN"<tspan class="u">]</tspan></text>
<text x="304" y="432" textLength="129" lengthAdjust="spacingAndGlyphs" style="fill:#222"><tspan class="u">[</tspan>frData."ALAMAT"<tspan class="u">]</tspan></text>
<text x="304" y="450" textLength="110" lengthAdjust="spacingAndGlyphs" style="fill:#222"><tspan class="u">[</tspan>frData."KOTA"<tspan class="u">]</tspan></text>
<text x="304" y="469" textLength="133" lengthAdjust="spacingAndGlyphs" style="fill:#222"><tspan class="u">[</tspan>frData."NEGARA"<tspan class="u">]</tspan></text>
<text x="304" y="487" textLength="149" lengthAdjust="spacingAndGlyphs" style="fill:#222"><tspan class="u">[</tspan>frData."KODE POS"<tspan class="u">]</tspan></text>
<text x="656.500" y="412" textLength="174.500" lengthAdjust="spacingAndGlyphs" style="fill:#222"><tspan class="u">[</tspan>frData."KETERANGAN"<tspan class="u">]</tspan></text>
<text x="1202.400" y="391" class="b" textLength="105.600" lengthAdjust="spacingAndGlyphs" style="fill:#111">Tanggal Bayar</text>
<text x="1186" y="422" textLength="131" lengthAdjust="spacingAndGlyphs" style="fill:#222"><tspan class="u">[</tspan>frData."TANGGAL</text>
<text x="1198" y="467" class="b" textLength="114.400" lengthAdjust="spacingAndGlyphs" style="fill:#111">Tanggal Terima</text>
<text x="1186" y="499" textLength="131" lengthAdjust="spacingAndGlyphs" style="fill:#222"><tspan class="u">[</tspan>frData."TANGGAL</text>

<path d="M283 532.500H1324.500M283 560H1324.500" stroke="#111" stroke-width="2"/>
<text x="287" y="552" class="b" textLength="20" lengthAdjust="spacingAndGlyphs" style="fill:#111">No</text>
<text x="337" y="552" textLength="147" lengthAdjust="spacingAndGlyphs" class="b" style="fill:#111">Nomor Faktur/Retur</text>
<text x="766.700" y="552" class="b" textLength="119.300" lengthAdjust="spacingAndGlyphs" style="fill:#111">Jumlah Tagihan</text>
<text x="944.500" y="552" class="b" textLength="151.500" lengthAdjust="spacingAndGlyphs" style="fill:#111">Jumlah Pembayaran</text>
<text x="1248" y="552" class="b" textLength="72" lengthAdjust="spacingAndGlyphs" style="fill:#111">Potongan</text>

<!-- master data -->
<rect x="284" y="622" width="1047" height="27" fill="#dda52f"/>
<path d="M284 622H1331" stroke="#b8b8b8"/>
<text x="288" y="639" class="b" textLength="95.600" lengthAdjust="spacingAndGlyphs">MasterData:</text><text x="390.500" y="639" textLength="86" lengthAdjust="spacingAndGlyphs">MasterData1</text>
<path d="M1265 629h16v17h-16z" fill="#e8c060" stroke="#f0d070"/><path d="M1267 633q6-3 12 0v11h-12z" fill="#fff3c4"/>
<text x="1284.500" y="641" textLength="43" lengthAdjust="spacingAndGlyphs" style="fill:#111">frData</text>
<path d="M284 649V671H1331V649" fill="none" stroke="#a8a8a8" stroke-width="1.500"/>
<text x="287" y="666" textLength="38" lengthAdjust="spacingAndGlyphs" style="fill:#222"><tspan class="u">[</tspan>LINE</text>
<text x="337.500" y="666" textLength="163" lengthAdjust="spacingAndGlyphs" style="fill:#222"><tspan class="u">[</tspan>frData."NO TAGIHAN"<tspan class="u">]</tspan></text>
<text x="779.600" y="666" textLength="107" lengthAdjust="spacingAndGlyphs" style="fill:#222"><tspan class="u">[</tspan>frData."TOTAL</text>
<text x="977" y="666" textLength="119.500" lengthAdjust="spacingAndGlyphs" style="fill:#222"><tspan class="u">[</tspan>frData."BAYAR"<tspan class="u">]</tspan></text>
<text x="1166.700" y="666" textLength="157" lengthAdjust="spacingAndGlyphs" style="fill:#222"><tspan class="u">[</tspan>frData."POTONGAN"<tspan class="u">]</tspan></text>

<!-- page footer -->
<rect x="284" y="732" width="1047" height="27" fill="#efefef"/>
<rect x="284" y="732" width="1047" height="132" fill="none" stroke="#b8b8b8" stroke-width="1.200"/>
<text x="288" y="749" class="b" textLength="95.600" lengthAdjust="spacingAndGlyphs">PageFooter:</text><text x="389" y="749" textLength="87" lengthAdjust="spacingAndGlyphs">PageFooter1</text>
<path d="M289 765H1331" stroke="#111" stroke-width="2.500"/>
<text x="326.500" y="787" textLength="95" lengthAdjust="spacingAndGlyphs" style="fill:#222">Diterima oleh,</text>
<text x="499" y="787" textLength="82.300" lengthAdjust="spacingAndGlyphs" style="fill:#222">Dibuat oleh,</text>
<text x="733" y="787" textLength="153" lengthAdjust="spacingAndGlyphs" class="b" style="fill:#111"><tspan class="u">[</tspan>SUM(&lt;frData."TOTA</text>
<text x="897" y="787" textLength="199" lengthAdjust="spacingAndGlyphs" class="b" style="fill:#111"><tspan class="u">[</tspan>SUM(&lt;frData."BAYAR"&gt;,M</text>
<text x="1105" y="787" textLength="215" lengthAdjust="spacingAndGlyphs" class="b" style="fill:#111"><tspan class="u">[</tspan>SUM(&lt;frData."POTONGAN"&gt;</text>
<path d="M320 830q-2 8 0 12q1 3 4 3H426q3 0 4-3q2-4 0-12M486 830q-2 8 0 12q1 3 4 3H592q3 0 4-3q2-4 0-12" fill="none" stroke="#111" stroke-width="1.500"/>

<!-- handles -->
<path fill="none" stroke="#333" stroke-width="1.100" d="M284 275h3m-3 0v3M392.500 275h3m-3 0v3M701 275h-3m3 0v3M393 303h3m-3 0v3M702.500 303h-3m3 0v3M393 352h3m-3 0v-3M285 352h3m-3 0v-3M317 358h3m-3 0v3M498 358h-3m3 0v3M317 383h3m-3 0v-3M498 383h-3m3 0v-3M664.500 358h3m-3 0v3M801 358h-3m3 0v3M664.500 383h3m-3 0v-3M801 383h-3m3 0v-3M301 385h3m-3 0v3M614 385h-3m3 0v3M301 412h3m-3 0v-3M614 412h-3m3 0v-3M301 417h3m-3 0v3M614 417h-3m3 0v3M301 498h3m-3 0v-3M614 498h-3m3 0v-3M654.500 397h3m-3 0v3M654.500 498h3m-3 0v-3M1149 397h-3m3 0v3M1149 498h-3m3 0v-3M934 278h3m-3 0v3M1325.500 278h-3m3 0v3M1012 327h3m-3 0v3M1012 348h3m-3 0v-3M1325.500 327h-3m3 0v3M1325.500 348h-3m3 0v-3M1189 375h3m-3 0v3M1320 375h-3m3 0v3M1189 395h3m-3 0v-3M1320 395h-3m3 0v-3M1179 406h3m-3 0v3M1322 406h-3m3 0v3M1179 427h3m-3 0v-3M1322 427h-3m3 0v-3M1189 452h3m-3 0v3M1320 452h-3m3 0v3M1189 472h3m-3 0v-3M1320 472h-3m3 0v-3M1179 483h3m-3 0v3M1322 483h-3m3 0v3M1179 503h3m-3 0v-3M1322 503h-3m3 0v-3M295.500 772h3m-3 0v3M454 772h-3m3 0v3M461.500 772h3m-3 0v3M619 772h-3m3 0v3M295.500 853h3m-3 0v-3M454 853h-3m3 0v-3M461.500 853h3m-3 0v-3M619 853h-3m3 0v-3"/>
<!-- guides -->
<path d="M333.700 247V957M724.700 247V957M890.700 247V957M1100 247V957" stroke="#66d9f2" stroke-width="1.300"/>
<path d="M332 649v3M332 669v3M723 649v3M889 649v3M1099 649v3M723 669v3M889 669v3M1099 669v3" stroke="#444" stroke-width="1.500"/>

<!-- left tool strip -->
<rect x="0" y="149" width="32" height="1357" fill="#efefef"/>
<rect x="2" y="130" width="29" height="27" rx="2" fill="#d4e6f7" stroke="#a9cdee"/>
<path d="M11 134v18l4-4 3 7 3-1-3-7h5z" fill="#222"/>
<path d="M10 183q-6-4-6-9q2-1 4 2l-1-9q2-2 3 0l2 6v-8q2-1 3 0l1 8l2-6q2-1 3 1l-1 6l3-3q2 0 2 2q-1 7-6 10z" fill="#fff" stroke="#3d4c60" stroke-width="1.300"/>
<circle cx="14" cy="199" r="7.500" fill="#dce8f5" stroke="#8a97a8" stroke-width="1.500"/><path d="M19 205l6 6" stroke="#e0a33a" stroke-width="3.500"/>
<text x="13" y="235" class="b c" style="font-family:'Liberation Serif',serif;font-size:20px;fill:#2c5a8c">T</text><path d="M22 227v13" stroke="#111" stroke-width="1.500"/>
<path d="M5 259l12-5 6 7-11 6z" fill="#e8c070" stroke="#b98b2e"/><path d="M18 255l7-5 2 3-6 6z" fill="#4a64b0"/>
<path d="M5 285h9v5H5z" fill="#b8c8dc" stroke="#5c7898"/><path d="M14 287h5M19 277v20" stroke="#333"/><path d="M20 276h8M20 297h8M20 276v4h8M20 297v-4h8" stroke="#5c7898" fill="none"/>
<rect x="6" y="308" width="19" height="19" fill="#efefef" stroke="#777"/><path d="M10 317l4 4 7-9" stroke="#2b5cb0" stroke-width="2.500" fill="none"/>
<rect x="5" y="337" width="22" height="20" fill="#f8f8f8" stroke="#555"/><path d="M5 341h22" stroke="#555" stroke-width="3"/><path d="M8 347h8M8 351h6" stroke="#222" stroke-width="1.500"/>
<rect x="6" y="367" width="21" height="18" fill="#f8f8f8" stroke="#444"/><path d="M9 373h8M9 378h6" stroke="#222" stroke-width="1.500"/><path d="M23 369v4M23 379v4" stroke="#555"/>
<text x="16" y="413" class="b c" style="font-family:'Liberation Serif',serif;font-size:21px;fill:#d86450">A</text>
<rect x="6" y="424" width="20" height="20" fill="#dfe3df" stroke="#8a8a8a"/><circle cx="16" cy="431" r="5" fill="#6fb45a"/><rect x="14" y="435" width="4" height="5" fill="#b88a3a"/>
<path d="M8 468l7-9q6-7 12-4l-7 9z" fill="#555"/><path d="M8 470h16" stroke="#7a8898" stroke-width="2.500"/>
<rect x="5" y="482" width="16" height="18" fill="url(#gB)" stroke="#667"/><rect x="15" y="492" width="12" height="11" fill="#f5d88a" stroke="#b98b2e"/>
<text x="15" y="528" class="b c" style="font-family:'Liberation Serif',serif;font-size:18px;fill:#333">Σ</text>
<rect x="6" y="543" width="20" height="16" fill="url(#gB)" stroke="#5c7898"/><rect x="6" y="543" width="20" height="5" fill="#7a9ac4"/>
<rect x="6" y="569" width="20" height="22" fill="#fbfbfb" stroke="#666"/><text x="16" y="583" class="c" style="font-size:13px;fill:#6d90c8">A</text><path d="M10 586h12" stroke="#444" stroke-width="2"/>
<rect x="4.500" y="601" width="23" height="16" fill="#fff" stroke="#6d90c8" stroke-width="1.500"/><text x="16" y="614" class="b c" style="font-family:'Liberation Mono',monospace;font-size:11px">OLE</text>
<rect x="6" y="629" width="20" height="20" fill="#f3f6fb" stroke="#777"/><path d="M9 633h4v4H9zM9 641h4v4H9zM15 635h8M20 640l-3 6" stroke="#4a78b8" fill="none"/>
<rect x="6" y="658" width="17" height="19" fill="#f3f6fb" stroke="#777"/><path d="M9 662h3v3H9zM9 669h3v4H9zM14 664h7" stroke="#4a78b8" fill="none"/><use href="#db" x="17" y="664" transform="translate(4 133.600) scale(.8)"/>
<path d="M4 698h7v10H4z" fill="#d9b42a"/><path d="M12 687h8v21h-8z" fill="#4f80c9"/><path d="M21 694h6v14h-6z" fill="#7ba860"/><path d="M4 709h24" stroke="#777"/>
<use href="#gauge" x="3" y="716"/><use href="#gauge" x="3" y="745"/>
<rect x="6" y="776" width="18" height="18" fill="#fff" stroke="#777"/><path d="M6 780h18M6 785h18M6 790h18M12 776v18M18 776v18" stroke="#9a9a9a"/>
<circle cx="15.500" cy="813" r="10.500" fill="#3f68b8" stroke="#5a7ab8"/><path d="M11 806q6-2 9 3-3 6-8 4zM16 816q4 1 5 3-3 3-6 1z" fill="#5da04e"/>
<rect x="6" y="832" width="20" height="20" fill="#fbfbfb" stroke="#666"/><text x="16" y="845" class="c" style="font-size:13px;fill:#6d90c8">A</text><rect x="9" y="847" width="3" height="4" fill="#555"/><rect x="14" y="847" width="3" height="4" fill="#555"/><rect x="20" y="847" width="3" height="4" fill="#555"/>
<rect x="5" y="862" width="10" height="20" fill="#777"/><rect x="17" y="862" width="11" height="20" fill="#555"/><text x="10" y="877" class="b c" style="font-size:14px;fill:#eee">1</text><text x="22.500" y="877" class="b c" style="font-size:14px;fill:#eee">2</text>
<rect x="6" y="890" width="19" height="20" fill="#fff" stroke="#777"/><path d="M9 905q5-2 6-11 1 8 7 8-8-1-13 3z" fill="none" stroke="#d8402e" stroke-width="1.500"/>
<rect x="4" y="925" width="11" height="10" rx="2" fill="#aaa"/><ellipse cx="23" cy="923" rx="5" ry="4" fill="#7cc07a"/><path d="M18 928l8 13H11z" fill="#f3d690" stroke="#c99a30"/>
<path d="M7 950v16M10 950v12M14 950v16M17 950v12M21 950v16M24 950v12M27 950v16" stroke="#888" stroke-width="1.800"/>

<!-- Report Tree -->
<rect x="32.500" y="152.500" width="141" height="29" fill="url(#gT)" stroke="#93a6ba"/>
<g clip-path="url(#cRT)"><text x="39" y="172" style="font-size:18px;fill:#111" textLength="96" lengthAdjust="spacingAndGlyphs">Report Tree</text></g>
<rect x="148" y="153" width="23" height="26" fill="#8e9cac"/><text x="159.500" y="169" class="c" style="font-size:9px;fill:#cdd4dc">×</text>
<rect x="33" y="182" width="140" height="180" fill="#efefef" stroke="#c2c2c2" stroke-width="1.500"/>
<rect x="36" y="183" width="110" height="150" fill="#fff"/>
<rect x="64" y="184" width="78" height="29" fill="#c6c6c6"/>
<path d="M72 187h17v21H72z" fill="url(#gB)" stroke="#3d4c60"/>
<text x="97" y="205" class="m" textLength="41" lengthAdjust="spacingAndGlyphs">Page1</text>
<path d="M46 194l6 6 6-6M73 221l6 6 6-6" fill="none" stroke="#aaa" stroke-width="2.500"/><path d="M52 185v4" stroke="#777"/>
<rect x="97" y="222" width="20" height="14" fill="#dbe6f2" stroke="#4e6e94"/><rect x="97" y="222" width="20" height="5" fill="#8aa9d0"/>
<g clip-path="url(#cPag)"><text x="124" y="234" class="m">PageHeader1</text></g>
<path d="M80 237v96M107 242v91" stroke="#777" stroke-width="1.500" stroke-dasharray="1.500 .8"/>
<path d="M107 257h12M107 286h12M107 315h12" stroke="#777" stroke-dasharray="2 1"/>
<rect x="124" y="247" width="20" height="19" fill="#dfe3df" stroke="#8a8a8a"/><circle cx="134" cy="254" r="5" fill="#6fb45a"/><rect x="132" y="258" width="4" height="5" fill="#b88a3a"/>
<text x="135" y="293" class="b c" style="font-family:'Liberation Serif',serif;font-size:20px;fill:#d86450">A</text>
<text x="135" y="322" class="b c" style="font-family:'Liberation Serif',serif;font-size:20px;fill:#d86450">A</text><path d="M124 327l16-16M128 329l16-16" stroke="#bbb"/>
<rect x="155" y="213" width="6" height="13" rx="2" fill="#8a8a8a"/><rect x="62" y="343" width="21" height="6" rx="3" fill="#8a8a8a"/>

<!-- Object Inspector -->
<rect x="32.500" y="367" width="141" height="27" fill="url(#gT)" stroke="#93a6ba"/>
<g clip-path="url(#cOI)"><text x="38" y="386" style="font-size:18px;fill:#111" textLength="136" lengthAdjust="spacingAndGlyphs">Object Inspector</text></g>
<rect x="148" y="369" width="23" height="23" fill="#8e9cac"/><text x="159.500" y="384" class="c" style="font-size:9px;fill:#cdd4dc">×</text>
<rect x="33.500" y="399.500" width="140" height="27" fill="#fff" stroke="#c8c8c8"/>
<g clip-path="url(#cCombo)"><text x="37" y="418" class="m">Page1: TfrxReportPage</text></g>
<rect x="147" y="400" width="26" height="26" fill="#fff"/><use href="#chev" x="157" y="410"/>
<path d="M38 460l5-23h38l4 23z" fill="#f0f0f0" stroke="#c4c4c4"/><path d="M83 460l3-23h36l4 23zM125 460l3-23h36l5 23z" fill="#fff" stroke="#c4c4c4"/>
<text x="45" y="456" textLength="33" lengthAdjust="spacingAndGlyphs" style="font-size:15px;fill:#222">Pro...</text><text x="87" y="456" textLength="34" lengthAdjust="spacingAndGlyphs" style="font-size:15px;fill:#222">Eve...</text><text x="130" y="456" textLength="32" lengthAdjust="spacingAndGlyphs" style="font-size:15px;fill:#222">Fav...</text>
<rect x="34" y="462" width="139" height="715.200" fill="url(#rows)"/>
<rect x="147.500" y="462" width="1.500" height="715" fill="#c2c2c2"/>
<g clip-path="url(#cName)">
<text class="p" x="53" y="478">BackPicture</text>
<text class="p" x="53" y="500">BackPicturePrintable</text>
<text class="p" x="53" y="521">BackPictureStretched</text>
<text class="p" x="53" y="543">BackPictureVisible</text>
<text class="p" x="53" y="565">BottomMargin</text>
<text class="p" x="53" y="586">Color</text>
<text class="p" x="53" y="608">Columns</text>
<text class="p" x="53" y="630">DataSet</text>
<text class="p" x="53" y="651">Duplex</text>
<text class="p" x="53" y="673">EndlessHeight</text>
<text class="p" x="53" y="695">EndlessWidth</text>
<text class="p" x="53" y="716">Font</text>
<text class="p" x="53" y="738">Frame</text>
<text class="p" x="53" y="760">LargeDesignHeight</text>
<text class="p" x="53" y="781">LeftMargin</text>
<text class="p" x="53" y="803">MirrorMargins</text>
<text class="p" x="53" y="825">MirrorMode</text>
<text class="p b" x="53" y="846">Name</text>
<text class="p" x="53" y="868">Orientation</text>
<text class="p" x="53" y="890">OutlineText</text>
<text class="p" x="53" y="911">PageCount</text>
<text class="p" x="53" y="933">PaperHeight</text>
<text class="p" x="53" y="955">PaperSize</text>
<text class="p" x="53" y="976">PaperWidth</text>
<text class="p" x="53" y="998">PrintIfEmpty</text>
<text class="p" x="53" y="1020">PrintOnPreviousPage</text>
<text class="p" x="53" y="1041">ResetPageNumbers</text>
<text class="p" x="53" y="1063">RightMargin</text>
<text class="p" x="53" y="1085">ShowTitleOnPreviousPage</text>
<text class="p" x="53" y="1106">Tag</text>
<text class="p" x="53" y="1128">TitleBeforeHeader</text>
<text class="p" x="53" y="1150">TopMargin</text>
<text class="p" x="53" y="1171">Visible</text>
</g>
<use href="#pl" x="35" y="704"/><use href="#pl" x="35" y="726"/><use href="#pl" x="35" y="812"/>
<g clip-path="url(#cVal)">
<text class="v" x="151" y="479">(None)</text>
<use href="#ck" x="151" y="486"/><text class="v" x="170" y="500">True</text>
<use href="#ck" x="151" y="508"/><text class="v" x="170" y="522">True</text>
<use href="#ck" x="151" y="530"/><text class="v" x="170" y="544">True</text>
<text class="v" x="151" y="565">1</text>
<rect x="151" y="573" width="17" height="17" fill="#000" stroke="#bbb"/><text class="v" x="170" y="587">clBlack</text>
<text class="v" x="151" y="609">0</text>
<text class="v" x="151" y="630">(None)</text>
<text class="v" x="151" y="652">dmNone</text>
<use href="#uk" x="151" y="660"/><text class="v" x="170" y="674">False</text>
<use href="#uk" x="151" y="681"/><text class="v" x="170" y="695">False</text>
<text class="v" x="151" y="717">(TFont)</text>
<text class="v" x="151" y="739">(TfrxFrame)</text>
<use href="#uk" x="151" y="746"/><text class="v" x="170" y="760">False</text>
<text class="v" x="151" y="782">1</text>
<use href="#uk" x="151" y="790"/><text class="v" x="170" y="804">False</text>
<text class="v" x="151" y="825">[]</text>
<text class="v b" x="151" y="847">Page1</text>
<text class="v" x="151" y="869">poPortrait</text>
<text class="v" x="151" y="912">1</text>
<text class="v" x="151" y="934">14,8</text>
<text class="v" x="151" y="955">Custom</text>
<text class="v" x="151" y="977">21</text>
<use href="#ck" x="151" y="985"/><text class="v" x="170" y="999">True</text>
<use href="#uk" x="151" y="1006"/><text class="v" x="170" y="1020">False</text>
<use href="#uk" x="151" y="1028"/><text class="v" x="170" y="1042">False</text>
<text class="v" x="151" y="1064">1</text>
<use href="#ck" x="151" y="1071"/><text class="v" x="170" y="1085">True</text>
<text class="v" x="151" y="1107">0</text>
<use href="#ck" x="151" y="1115"/><text class="v" x="170" y="1129">True</text>
<text class="v" x="151" y="1150">1</text>
<use href="#ck" x="151" y="1158"/><text class="v" x="170" y="1172">True</text>
</g>
<path d="M34 1406.500H173" stroke="#b4b4b4"/><rect x="34" y="1412" width="139" height="93" fill="#f1f1f1"/><path d="M34 1505.500H173" stroke="#bdbdbd"/>
<rect x="174" y="810" width="9" height="37" fill="#cfcfcf"/><path d="M177 814v28M180 814v28" stroke="#999" stroke-dasharray="2 2"/>

<!-- vertical ruler -->
<rect x="192" y="248" width="24" height="1258" fill="#fff"/>
<path d="M205 248V1506" stroke="#777" stroke-width="3" stroke-dasharray="1 4.510"/>
<path d="M205 275.500V1506" stroke="#555" stroke-width="7" stroke-dasharray="1 54.100"/>
<path d="M192 432h15" stroke="#333" stroke-width="1.300"/>
<g>
<text class="r" transform="translate(210 303.100) rotate(-90)">1</text><text class="r" transform="translate(210 358.200) rotate(-90)">2</text><text class="r" transform="translate(210 413.300) rotate(-90)">3</text><text class="r" transform="translate(210 468.400) rotate(-90)">4</text><text class="r" transform="translate(210 523.500) rotate(-90)">5</text><text class="r" transform="translate(210 578.600) rotate(-90)">6</text><text class="r" transform="translate(210 633.700) rotate(-90)">7</text><text class="r" transform="translate(210 688.800) rotate(-90)">8</text><text class="r" transform="translate(210 743.900) rotate(-90)">9</text><text class="r" transform="translate(210 799) rotate(-90)">10</text><text class="r" transform="translate(210 854.100) rotate(-90)">11</text><text class="r" transform="translate(210 909.200) rotate(-90)">12</text><text class="r" transform="translate(210 964.300) rotate(-90)">13</text><text class="r" transform="translate(210 1019.400) rotate(-90)">14</text><text class="r" transform="translate(210 1074.500) rotate(-90)">15</text><text class="r" transform="translate(210 1129.600) rotate(-90)">16</text><text class="r" transform="translate(210 1184.700) rotate(-90)">17</text><text class="r" transform="translate(210 1239.800) rotate(-90)">18</text><text class="r" transform="translate(210 1294.900) rotate(-90)">19</text><text class="r" transform="translate(210 1350) rotate(-90)">20</text><text class="r" transform="translate(210 1405.100) rotate(-90)">21</text><text class="r" transform="translate(210 1460.200) rotate(-90)">22</text>
</g>

<!-- Data Tree -->
<rect x="2433" y="183" width="127" height="1323" fill="#f0f0f0"/>
<rect x="2433" y="810" width="8" height="37" fill="#cfcfcf"/><path d="M2437 814v28" stroke="#999" stroke-dasharray="2 2"/>
<path d="M2441 183V1506" stroke="#c4c4c4"/>
<rect x="2441.500" y="153" width="118" height="27" fill="url(#gT)" stroke="#93a6ba"/>
<g clip-path="url(#cDT)"><text x="2447" y="172" style="font-size:18px;fill:#111" textLength="80" lengthAdjust="spacingAndGlyphs">Data Tree</text></g>
<rect x="2535" y="154" width="22" height="23" fill="#8e9cac"/><text x="2546" y="169" class="c" style="font-size:9px;fill:#cdd4dc">×</text>
<path d="M2447 207l5-24h23l4 24z" fill="#f0f0f0" stroke="#c4c4c4"/><path d="M2476 207l2-24h23l3 24zM2503 207l2-24h22l3 24zM2530 207l2-24h22l3 24z" fill="#fff" stroke="#c4c4c4"/>
<text x="2453" y="203" textLength="16" lengthAdjust="spacingAndGlyphs" style="font-size:15px;fill:#222">D..</text><text x="2480" y="203" textLength="19" lengthAdjust="spacingAndGlyphs" style="font-size:15px;fill:#222">V...</text><text x="2506" y="203" textLength="17" lengthAdjust="spacingAndGlyphs" style="font-size:15px;fill:#222">F...</text><text x="2533" y="203" textLength="19" lengthAdjust="spacingAndGlyphs" style="font-size:15px;fill:#222">C...</text>
<rect x="2442" y="207" width="116.500" height="1296" fill="#f0f0f0" stroke="#c4c4c4" stroke-width="1.500"/>
<path d="M2533.500 240V1478" stroke="#fff" stroke-width="1.500"/>
<use href="#db" x="2448" y="214"/>
<text x="2482" y="224" class="b c" style="font-size:10px">A</text><text x="2482" y="234" class="b c" style="font-size:12px;fill:#3d6bb5">A</text><text x="2494" y="224" class="b c" style="font-size:12px;fill:#a84a3a">Z</text><path d="M2489 228l7 6" stroke="#222" stroke-width="1.500"/><use href="#arr" x="2502" y="222"/>
<use href="#db" x="2522" y="214"/><path d="M2527 224h8v-5M2533 218v9h-8" stroke="#222" stroke-width="1.500" fill="none"/><use href="#arr" x="2546" y="222"/>
<path d="M2452 247l6 6 6-6" fill="none" stroke="#aaa" stroke-width="2.500"/><path d="M2458 240v3" stroke="#777"/>
<use href="#db" x="2475" y="242"/>
<g clip-path="url(#cFr)"><text x="2503" y="260" class="m b">frData</text></g>
<path d="M2487 268V1478" stroke="#777" stroke-width="1.500" stroke-dasharray="1.500 .8"/>
<rect x="2487" y="268" width="16" height="1210" fill="url(#brn)"/>
<g clip-path="url(#cTree)">
<use href="#n0" x="2503" y="274"/><use href="#nA" x="2503" y="303"/><use href="#n0" x="2503" y="332"/><use href="#nA" x="2503" y="361"/><use href="#nA" x="2503" y="390"/><use href="#nA" x="2503" y="420"/><use href="#nA" x="2503" y="449"/><use href="#nA" x="2503" y="478"/><use href="#nA" x="2503" y="507"/><use href="#nA" x="2503" y="536"/><use href="#nA" x="2503" y="565"/><use href="#nA" x="2503" y="595"/><use href="#nA" x="2503" y="624"/><use href="#nA" x="2503" y="653"/><use href="#nA" x="2503" y="682"/><use href="#n0" x="2503" y="711"/><use href="#n0" x="2503" y="740"/><use href="#n0" x="2503" y="770"/><use href="#n0" x="2503" y="799"/><use href="#n0" x="2503" y="828"/><use href="#cal" x="2503" y="857"/><use href="#cal" x="2503" y="886"/><use href="#cal" x="2503" y="915"/><use href="#cal" x="2503" y="945"/><use href="#cal" x="2503" y="974"/><use href="#n0" x="2503" y="1003"/><use href="#nA" x="2503" y="1032"/><use href="#nA" x="2503" y="1061"/><use href="#cal" x="2503" y="1090"/><use href="#cal" x="2503" y="1120"/><use href="#nA" x="2503" y="1149"/><use href="#nA" x="2503" y="1178"/><use href="#n0" x="2503" y="1207"/><use href="#n0" x="2503" y="1236"/><use href="#cal" x="2503" y="1265"/><use href="#nA" x="2503" y="1295"/><use href="#n0" x="2503" y="1324"/><use href="#n0" x="2503" y="1353"/><use href="#nA" x="2503" y="1382"/><use href="#cal" x="2503" y="1411"/><use href="#n0" x="2503" y="1440"/><use href="#nA" x="2503" y="1470"/>
<g class="b" style="font-size:15px">
<text x="2531" y="288" class="b">]</text><text x="2531" y="317" class="b">I</text><text x="2531" y="346" class="b">]</text><text x="2531" y="375" class="b">I</text><text x="2531" y="404" class="b">I</text><text x="2531" y="434" class="b">A</text><text x="2531" y="463" class="b">I</text><text x="2531" y="492" class="b">I</text><text x="2531" y="521" class="b">I</text><text x="2531" y="550" class="b">I</text><text x="2531" y="576" class="b">-</text><text x="2531" y="606" class="b">-</text><text x="2531" y="635" class="b">-</text><text x="2531" y="664" class="b">-</text><text x="2531" y="693" class="b">-</text><text x="2531" y="725" class="b">I</text><text x="2531" y="754" class="b">I</text><text x="2531" y="784" class="b">I</text><text x="2531" y="813" class="b">I</text><text x="2531" y="842" class="b">I</text><text x="2531" y="868" class="b">-</text><text x="2531" y="897" class="b">-</text><text x="2531" y="926" class="b">-</text><text x="2531" y="956" class="b">-</text><text x="2531" y="985" class="b">-</text><text x="2531" y="1017" class="b">I</text><text x="2531" y="1046" class="b">I</text><text x="2531" y="1075" class="b">I</text><text x="2531" y="1101" class="b">-</text><text x="2531" y="1131" class="b">-</text><text x="2531" y="1163" class="b">I</text><text x="2531" y="1192" class="b">I</text><text x="2531" y="1221" class="b">S</text><text x="2531" y="1250" class="b">]</text><text x="2531" y="1276" class="b">-</text><text x="2531" y="1309" class="b">I</text><text x="2531" y="1335" class="b">-</text><text x="2531" y="1367" class="b">]</text><text x="2531" y="1396" class="b">I</text><text x="2531" y="1422" class="b">-</text><text x="2531" y="1451" class="b">-</text><text x="2531" y="1484" class="b">I</text>
</g>
</g>
<rect x="2543" y="494" width="6" height="754" rx="2" fill="#8a8a8a"/>
<rect x="2468" y="1489" width="15" height="6" rx="3" fill="#8a8a8a"/>

<!-- status bar -->
<rect y="1506" width="2560" height="24" fill="#f0f0f0"/><rect y="1506" width="2560" height="1" fill="#d4d4d4"/><rect y="1530" width="2560" height="2" fill="#333"/>
<path d="M109 1506v24M444.500 1506v24" stroke="#d0d0d0"/>
<text x="1" y="1525" textLength="83" lengthAdjust="spacingAndGlyphs" style="font-size:15px;fill:#111">Centimeters</text>
<path d="M118 1510v18M113 1516h16" stroke="#777" stroke-dasharray="2 1"/><rect x="124" y="1519" width="10" height="11" fill="#9dbce8"/>
<text x="137" y="1525" textLength="70" lengthAdjust="spacingAndGlyphs" style="font-size:15px;fill:#111">2,86; 3,33</text>
<text x="448.500" y="1525" textLength="41.500" lengthAdjust="spacingAndGlyphs" style="font-size:15px;fill:#111">Page1</text>
</svg>
</body></html>
